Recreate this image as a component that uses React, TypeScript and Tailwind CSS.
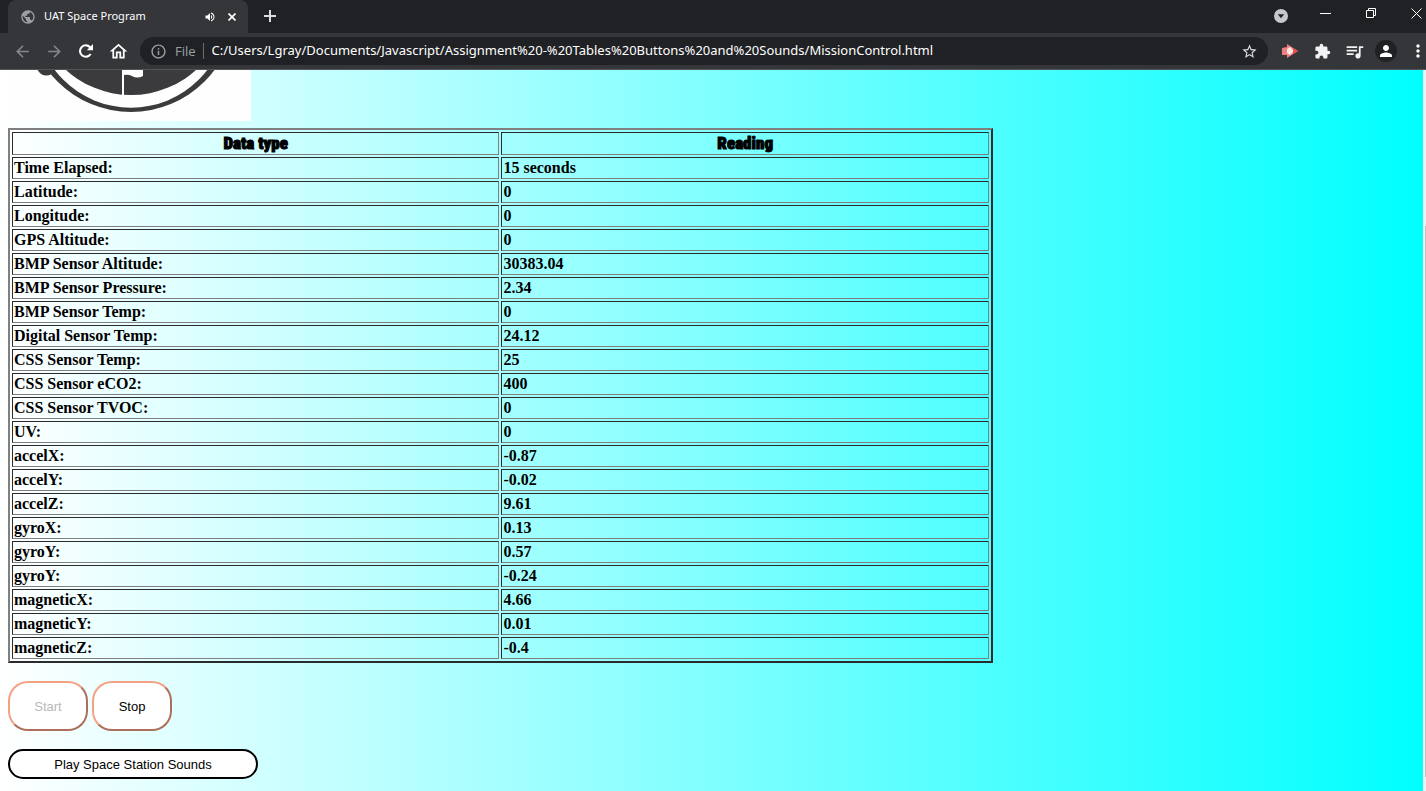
import type { ReactNode } from "react";
import {
  MdArrowBack,
  MdArrowForward,
  MdOutlineHome,
  MdInfoOutline,
  MdStarBorder,
  MdExtension,
  MdQueueMusic,
  MdPerson,
  MdMoreVert,
  MdPublic,
  MdVolumeUp,
} from "react-icons/md";

const readings: [string, string][] = [
  ["Time Elapsed:", "15 seconds"],
  ["Latitude:", "0"],
  ["Longitude:", "0"],
  ["GPS Altitude:", "0"],
  ["BMP Sensor Altitude:", "30383.04"],
  ["BMP Sensor Pressure:", "2.34"],
  ["BMP Sensor Temp:", "0"],
  ["Digital Sensor Temp:", "24.12"],
  ["CSS Sensor Temp:", "25"],
  ["CSS Sensor eCO2:", "400"],
  ["CSS Sensor TVOC:", "0"],
  ["UV:", "0"],
  ["accelX:", "-0.87"],
  ["accelY:", "-0.02"],
  ["accelZ:", "9.61"],
  ["gyroX:", "0.13"],
  ["gyroY:", "0.57"],
  ["gyroY:", "-0.24"],
  ["magneticX:", "4.66"],
  ["magneticY:", "0.01"],
  ["magneticZ:", "-0.4"],
];

function IconButton({ label, className = "", children }: { label: string; className?: string; children: ReactNode }) {
  return (
    <button type="button" aria-label={label} className={`flex shrink-0 items-center justify-center ${className}`}>
      {children}
    </button>
  );
}

function TabStrip() {
  return (
    <div className="flex h-[33px] items-start bg-[#202124] pl-2 text-white">
      <div className="flex h-full w-60 items-center gap-2 rounded-t-lg bg-[#35363a] pr-2 pl-3">
        <MdPublic size={16} className="text-[#9aa0a6]" />
        <span className="flex-1 font-['Noto_Sans','Open_Sans',sans-serif] text-[11px] whitespace-nowrap">UAT Space Program</span>
        <IconButton label="Mute tab" className="w-3"><MdVolumeUp size={12} /></IconButton>
        <IconButton label="Close tab" className="w-4">
          <svg width="8" height="8" viewBox="0 0 8 8" stroke="white" strokeWidth="1.7"><path d="M.5.5l7 7M7.5.5l-7 7" /></svg>
        </IconButton>
      </div>
      <IconButton label="New tab" className="h-8 w-11">
        <svg width="12" height="12" viewBox="0 0 12 12" stroke="#dadce0" strokeWidth="2"><path d="M6 0v12M0 6h12" /></svg>
      </IconButton>
      <div className="flex-1" />
      <IconButton label="Search tabs" className="h-8 w-8">
        <svg width="14" height="14" viewBox="0 0 14 14"><circle cx="7" cy="7" r="7" fill="#c4c7cb" /><path d="M3.8 5.2h6.4L7 9.2z" fill="#202124" /></svg>
      </IconButton>
      <IconButton label="Minimize" className="ml-[5px] h-[26px] w-[46px]">
        <svg width="11" height="11" viewBox="0 0 11 11"><path d="M0 5.5h11" stroke="white" /></svg>
      </IconButton>
      <IconButton label="Restore" className="h-[26px] w-[46px]">
        <svg width="11" height="11" viewBox="0 0 11 11" fill="none" stroke="white"><path d="M.5 2.5h7v7h-7zM2.5 2.5v-2h7v7h-2" /></svg>
      </IconButton>
      <IconButton label="Close window" className="h-[26px] w-8 justify-end pr-1">
        <svg width="11" height="11" viewBox="0 0 11 11" stroke="white"><path d="M.5.5l10 10M10.5.5l-10 10" /></svg>
      </IconButton>
    </div>
  );
}

function Toolbar() {
  return (
    <div className="flex h-[37px] items-center border-b border-[#55565a] bg-[#35363a] pl-[6px] text-white">
      <IconButton label="Back" className="w-8 text-[#85878a]"><MdArrowBack size={19} /></IconButton>
      <IconButton label="Forward" className="w-8 text-[#85878a]"><MdArrowForward size={19} /></IconButton>
      <IconButton label="Reload" className="w-8">
        <svg width="14" height="14" viewBox="0 0 14 14"><path d="M11.6 10A5.7 5.7 0 1 1 11.3 3.6" fill="none" stroke="white" strokeWidth="2.1" /><path d="M14 0v6.2H7.8z" fill="white" /></svg>
      </IconButton>
      <IconButton label="Home" className="w-8"><MdOutlineHome size={21} /></IconButton>
      <div className="ml-[6px] flex h-7 flex-1 items-center rounded-full bg-[#202124] px-[10px]">
        <MdInfoOutline size={17} className="shrink-0 text-[#9aa0a6]" />
        <span className="ml-2 border-r border-[#6b6d70] pr-[7px] text-[13px] leading-4 text-[#9aa0a6]">File</span>
        <input
          aria-label="Address"
          className="ml-2 min-w-0 flex-1 bg-transparent font-['Noto_Sans','Open_Sans',sans-serif] text-[13px] outline-none"
          defaultValue="C:/Users/Lgray/Documents/Javascript/Assignment%20-%20Tables%20Buttons%20and%20Sounds/MissionControl.html"
        />
        <IconButton label="Bookmark" className="text-[#dadce0]"><MdStarBorder size={17} /></IconButton>
      </div>
      <IconButton label="Recorder extension" className="ml-[6px] w-8">
        <svg width="16" height="14" viewBox="0 0 16 14"><path d="M0 4l5-1V0l11 7-11 7v-3H0z" fill="#f08080" /><path d="M5 5l3-2 4 4-4 4-3-2z" fill="#ffe9e6" /><path d="M11 4l5 3-5 3z" fill="#e9524c" /></svg>
      </IconButton>
      <IconButton label="Extensions" className="w-8 text-[#f1f3f4]"><MdExtension size={17} /></IconButton>
      <IconButton label="Media controls" className="w-8 text-[#f1f3f4]"><MdQueueMusic size={21} /></IconButton>
      <IconButton label="Profile" className="mr-[13px] ml-[5px] h-[22px] w-[22px] rounded-full bg-[#202124]"><MdPerson size={18} /></IconButton>
      <IconButton label="Menu" className="w-4"><MdMoreVert size={20} className="shrink-0" /></IconButton>
    </div>
  );
}

function Logo() {
  return (
    <svg width="243" height="51" viewBox="8 70 243 51" role="img" aria-label="UAT Space Program logo" className="block">
      <path d="M8 70h243v51H8z" fill="#fefefe" />
      <circle cx="131" cy="8" r="104" fill="#3b3b3e" />
      <circle cx="131" cy="11.7" r="96" fill="#fefefe" />
      <circle cx="131" cy="-2" r="97" fill="#3b3b3e" />
      <path d="M37 69h19l-4 5q-8 4-13-2z" fill="#3b3b3e" />
      <path d="M122 70h21v6q-6 3-11 0-4-2-8-1v20h-2z" fill="#fefefe" />
    </svg>
  );
}

export default function App() {
  return (
    <div className="flex min-h-screen flex-col font-['Open_Sans','Noto_Sans',sans-serif]">
      <header>
        <TabStrip />
        <Toolbar />
      </header>
      <div className="flex flex-1">
        <main className="min-w-0 flex-1 bg-linear-to-r/srgb from-white to-[#00ffff] px-2 pb-3 font-['Liberation_Serif',serif] text-black">
          <Logo />
          <table className="mt-[7px] w-[70%] table-fixed border-separate border-spacing-[2px] border-2 border-t-[#808080] border-r-[#2b2b2b] border-b-[#2b2b2b] border-l-[#808080] text-[16px] leading-[18px] font-bold">
            <thead>
              <tr className="font-['Impact','Roboto_Condensed','Liberation_Sans',sans-serif] text-[17px] leading-[19px]">
                {["Data type", "Reading"].map((title) => (
                  <th key={title} className="border border-t-[#2b2b2b] border-r-[#808080] border-b-[#808080] border-l-[#2b2b2b] p-px font-black [-webkit-text-stroke:1px_black]">{title}</th>
                ))}
              </tr>
            </thead>
            <tbody>
              {readings.map(([name, value], i) => (
                <tr key={i}>
                  <td className="border border-t-[#2b2b2b] border-r-[#808080] border-b-[#808080] border-l-[#2b2b2b] p-px">{name}</td>
                  <td className="border border-t-[#2b2b2b] border-r-[#808080] border-b-[#808080] border-l-[#2b2b2b] p-px">{value}</td>
                </tr>
              ))}
            </tbody>
          </table>
          <div className="mt-[18px] flex gap-1 font-['Liberation_Sans',sans-serif] text-[13px]">
            <button type="button" disabled className="h-[50px] w-20 rounded-[20px] border-2 border-t-[#f4a083] border-r-[#ad6f5b] border-b-[#ad6f5b] border-l-[#f4a083] bg-white pt-0.5 text-[#b8b8b8]">Start</button>
            <button type="button" className="h-[50px] w-20 rounded-[20px] border-2 border-t-[#f4a083] border-r-[#ad6f5b] border-b-[#ad6f5b] border-l-[#f4a083] bg-white pt-0.5">Stop</button>
          </div>
          <button type="button" className="mt-[18px] h-[30px] w-[250px] rounded-full border-2 border-black bg-white pt-0.5 font-['Liberation_Sans',sans-serif] text-[13px]">Play Space Station Sounds</button>
        </main>
        <div className="flex w-[3px] flex-col bg-[#e8f4f4] pl-[2px]">
          <div className="grow-[156]" />
          <div className="grow-[551] bg-[#c1c1c1]" />
          <div className="grow-[14]" />
        </div>
      </div>
    </div>
  );
}
